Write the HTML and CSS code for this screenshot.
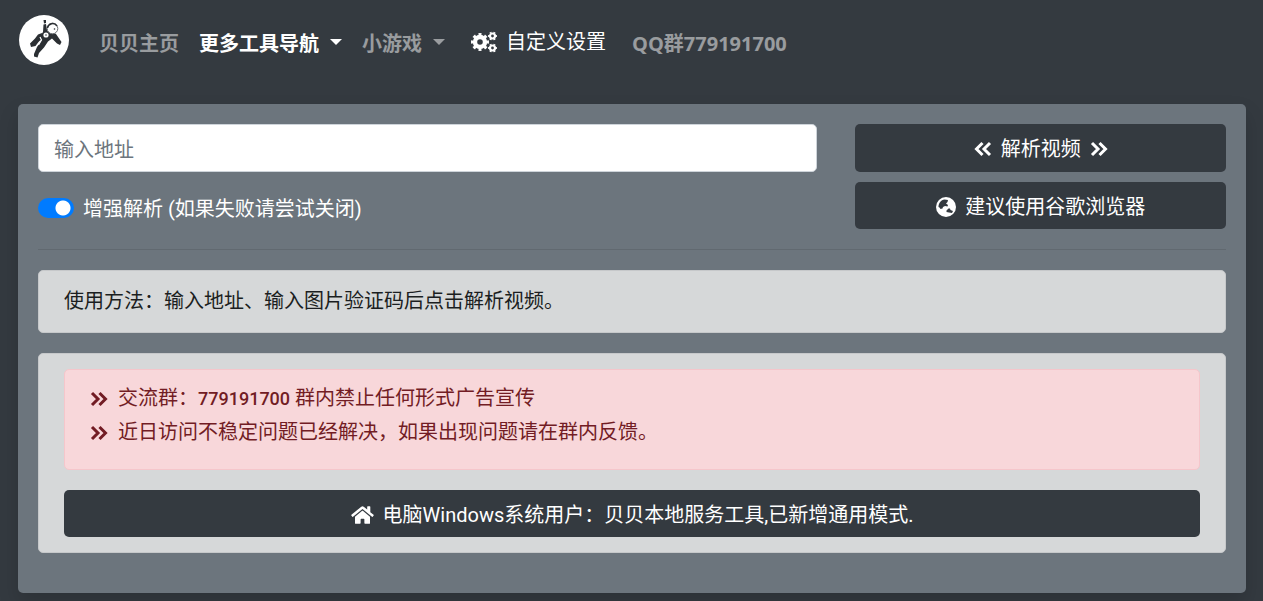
FILE: index.html
```html
<!DOCTYPE html>
<html lang="zh-CN">
<head>
    <meta charset="UTF-8">
    <meta name="viewport" content="width=device-width, initial-scale=1.0">
    <title>贝贝视频解析</title>

    <!--CSS Styling-->
    <link rel="stylesheet" href="styles.css">
</head>
<body>
    <!-- Navigation Bar -->
    <nav class="navbar">
        <a class="brand" href="#" aria-label="贝贝主页">
            <svg class="logo" viewBox="5 5 50 50" aria-hidden="true">
                <circle cx="30" cy="30" r="25" fill="#fff"/>
                <g fill="#2b2f33">
                    <path d="M29.500 10l2.500 0 0 3-2 .5zM29.500 14.500l2.500-.5 1 6 2 3-4 2-2-3z"/>
                    <path d="M29 22l8-1 5 3 5.500 8-1.500 3-3-1.500-5-5-4 3-4 6-5 5.500-1.500 4.500-3.500-1 0-2.500 3-7 4-6-2-3z"/>
                    <path d="M28 23l-4 1.500-3 4-5 5 1 3.500 4.500-1 3-4 3-3z"/>
                </g>
                <circle cx="38.500" cy="18.500" r="5.300" fill="#fff" stroke="#6b6f73" stroke-width="1"/>
                <path d="M33.500 18a5.200 5.200 0 0 1 9.500-2" fill="none" stroke="#2b2f33" stroke-width="1.500"/>
                <circle cx="40.500" cy="19" r=".8" fill="#2b2f33"/>
                <circle cx="32" cy="25" r="2.600" fill="#fff"/>
                <circle cx="32" cy="25" r="1" fill="#8b9094"/>
                <path d="M26 27l1.500 3-3 5" fill="none" stroke="#fff" stroke-width="1.200"/>
            </svg>
        </a>
        <div class="nav-links">
            <a class="nav-link" href="#">贝贝主页</a>
            <a class="nav-link active" href="#">更多工具导航<span class="caret"></span></a>
            <a class="nav-link" href="#">小游戏<span class="caret"></span></a>
            <button class="settings-btn" type="button">
                <svg class="icon-cogs" viewBox="0 0 26 22" aria-hidden="true">
                    <g fill="none" stroke="currentColor">
                        <circle cx="9" cy="11" r="5" stroke-width="4.400"/>
                        <circle cx="9" cy="11" r="7.700" stroke-width="2.600" pathLength="16" stroke-dasharray="1 1" stroke-dashoffset=".5"/>
                        <circle cx="21.500" cy="5" r="2.500" stroke-width="2.200"/>
                        <circle cx="21.500" cy="5" r="3.900" stroke-width="1.200" pathLength="12" stroke-dasharray="1 1" stroke-dashoffset=".5"/>
                        <circle cx="21.500" cy="17" r="2.500" stroke-width="2.200"/>
                        <circle cx="21.500" cy="17" r="3.900" stroke-width="1.200" pathLength="12" stroke-dasharray="1 1" stroke-dashoffset=".5"/>
                    </g>
                </svg>
                自定义设置
            </button>
            <a class="nav-link" href="#">QQ群779191700</a>
        </div>
    </nav>

    <!-- Main Card -->
    <main class="card">
        <form class="row">
            <div class="col-main">
                <input type="text" id="url" class="url-input" placeholder="输入地址" aria-label="输入地址">
                <label class="switch" for="enhance">
                    <input type="checkbox" id="enhance" class="switch-input" checked>
                    <span class="switch-text">增强解析 (如果失败请尝试关闭)</span>
                </label>
            </div>
            <div class="col-side">
                <button class="btn btn-parse" type="button">
                    <svg class="icon-angle" viewBox="0 0 18 16" aria-hidden="true"><path d="M8.500 2l-6 6 6 6M16 2l-6 6 6 6"/></svg>
                    解析视频
                    <svg class="icon-angle" viewBox="0 0 18 16" aria-hidden="true"><path d="M2 2l6 6-6 6M9.500 2l6 6-6 6"/></svg>
                </button>
                <button class="btn" type="button">
                    <svg class="icon-globe" viewBox="0 0 20 20" aria-hidden="true">
                        <circle cx="10" cy="10" r="10" fill="currentColor"/>
                        <path fill="#343a40" d="M2.500 10c0-4 2.500-7 6-7.500l3.500.5-.5 2-1.500 1.500 2 1.500-.5 1.500-2.500-.5-2 1-.5 1.500-2 .5-1-1.500zM10.500 13.500l2-2 1.500 0 .5 1.500 2.500 1-1 2-3-.5-2.500-.5z"/>
                    </svg>
                    建议使用谷歌浏览器
                </button>
            </div>
        </form>

        <hr class="divider">

        <div class="alert">使用方法：输入地址、输入图片验证码后点击解析视频。</div>

        <div class="alert">
            <ul class="notice">
                <li>
                    <svg class="icon-angle" viewBox="0 0 18 16" aria-hidden="true"><path d="M2 2l6 6-6 6M9.500 2l6 6-6 6"/></svg>
                    <span>交流群：<b>779191700</b> 群内禁止任何形式广告宣传</span>
                </li>
                <li>
                    <svg class="icon-angle" viewBox="0 0 18 16" aria-hidden="true"><path d="M2 2l6 6-6 6M9.500 2l6 6-6 6"/></svg>
                    <span>近日访问不稳定问题已经解决，如果出现问题请在群内反馈。</span>
                </li>
            </ul>
            <button class="btn" type="button">
                <svg class="icon-home" viewBox="0 0 576 512" aria-hidden="true">
                    <path fill="currentColor" d="M280.370 148.260L96 300.110V464a16 16 0 0 0 16 16l112.060-.29a16 16 0 0 0 15.920-16V368a16 16 0 0 1 16-16h64a16 16 0 0 1 16 16v95.640a16 16 0 0 0 16 16.050L464 480a16 16 0 0 0 16-16V300L295.670 148.260a12.190 12.190 0 0 0-15.300 0zM571.600 251.470L488 182.560V44.050a12 12 0 0 0-12-12h-56a12 12 0 0 0-12 12v72.610L318.470 43a48 48 0 0 0-61 0L4.340 251.470a12 12 0 0 0-1.600 16.900l25.500 31A12 12 0 0 0 45.150 301l235.220-193.740a12.190 12.190 0 0 1 15.300 0L530.900 301a12 12 0 0 0 16.900-1.600l25.500-31a12 12 0 0 0-1.700-16.930z"/>
                </svg>
                电脑Windows系统用户：贝贝本地服务工具,已新增通用模式.
            </button>
        </div>
    </main>
</body>
</html>
```
FILE: styles.css
```css
/* Global Styles */
* {
    box-sizing: border-box;
}

body {
    margin: 0;
    font-family: Roboto, "Noto Sans CJK SC", sans-serif;
    font-size: 20px;
    line-height: 30px;
    color: white;
    background-color: #343a40;
}

button,
input {
    font: inherit;
}

svg {
    flex: none;
}

/* Navbar */
.navbar {
    display: flex;
    align-items: center;
    padding: 15px 19px;
}

.brand {
    display: flex;
    margin-right: 20px;
}

.logo {
    width: 50px;
    height: 50px;
}

.nav-links {
    display: flex;
    align-items: center;
}

.nav-link {
    display: flex;
    align-items: center;
    padding: 14px 10px 6px;
    font-family: "Open Sans", "Noto Sans CJK SC", sans-serif;
    font-weight: bold;
    color: rgba(255, 255, 255, 0.5);
    text-decoration: none;
}

.nav-link.active {
    color: white;
}

.nav-link:hover {
    color: rgba(255, 255, 255, 0.75);
}

.caret {
    margin: -4px 0 0 11px;
    border-top: 6px solid;
    border-right: 6px solid transparent;
    border-left: 6px solid transparent;
}

.settings-btn {
    display: flex;
    align-items: center;
    gap: 9px;
    padding: 10px 16px 6px;
    border: none;
    color: white;
    background: none;
    cursor: pointer;
}

/* Main Card */
.card {
    margin: 24px 17px 8px 18px;
    padding: 20px 20px 40px;
    border-radius: 5px;
    background-color: #6c757d;
    box-shadow: 0 10px 20px rgba(0, 0, 0, 0.15);
}

.row {
    display: flex;
    margin: 0 -19px;
}

.col-main,
.col-side {
    display: flex;
    flex-direction: column;
    padding: 0 19px;
}

.col-main {
    width: calc(100% * 2 / 3);
    gap: 20px;
}

.col-side {
    width: calc(100% / 3);
    gap: 10px;
}

.url-input {
    width: 100%;
    height: 48px;
    padding: 10px 15px 7px;
    border: 1px solid #ced4da;
    border-radius: 5px;
    color: #495057;
    background-color: white;
}

.url-input::placeholder {
    color: #6c757d;
    opacity: 1;
}

/* Switch */
.switch {
    display: flex;
    align-items: center;
    gap: 9px;
    cursor: pointer;
}

.switch-text {
    padding-top: 2px;
}

.switch-input {
    appearance: none;
    width: 36px;
    height: 20px;
    margin: 0;
    border-radius: 10px;
    background: radial-gradient(circle at 25px 10px, white 7px, #007bff 8px);
    cursor: pointer;
}

.switch-input:not(:checked) {
    background: radial-gradient(circle at 11px 10px, white 7px, #adb5bd 8px);
}

/* Buttons */
.btn {
    display: flex;
    justify-content: center;
    align-items: center;
    gap: 9px;
    width: 100%;
    padding: 10px 15px 7px;
    border: none;
    border-radius: 5px;
    line-height: 30px;
    color: white;
    background-color: #343a40;
    cursor: pointer;
}

.btn-parse {
    padding-bottom: 8px;
}

.btn:hover {
    background-color: #23272b;
}

.divider {
    margin: 20px 0;
    border: none;
    border-top: 1px solid rgba(0, 0, 0, 0.1);
}

/* Alerts */
.alert {
    padding: 15px 25px;
    border: 1px solid #c6c8ca;
    border-radius: 5px;
    line-height: 31px;
    color: #1b1e21;
    background-color: #d6d8d9;
}

.alert + .alert {
    margin-top: 20px;
}

.notice {
    display: flex;
    flex-direction: column;
    gap: 3px;
    margin: 0 0 20px;
    padding: 13px 25px 21px;
    border: 1px solid #f5c6cb;
    border-radius: 5px;
    color: #721c24;
    background-color: #f8d7da;
    list-style: none;
}

.notice li {
    display: flex;
    align-items: center;
    gap: 10px;
}

.notice b {
    font-size: 18px;
    font-weight: 500;
}

/* Icons */
.icon-angle {
    width: 18px;
    height: 16px;
    fill: none;
    stroke: currentColor;
    stroke-width: 3;
}

.icon-cogs {
    width: 26px;
    height: 22px;
}

.icon-globe {
    width: 20px;
    height: 20px;
}

.icon-home {
    width: 23px;
    height: 20px;
}
```
